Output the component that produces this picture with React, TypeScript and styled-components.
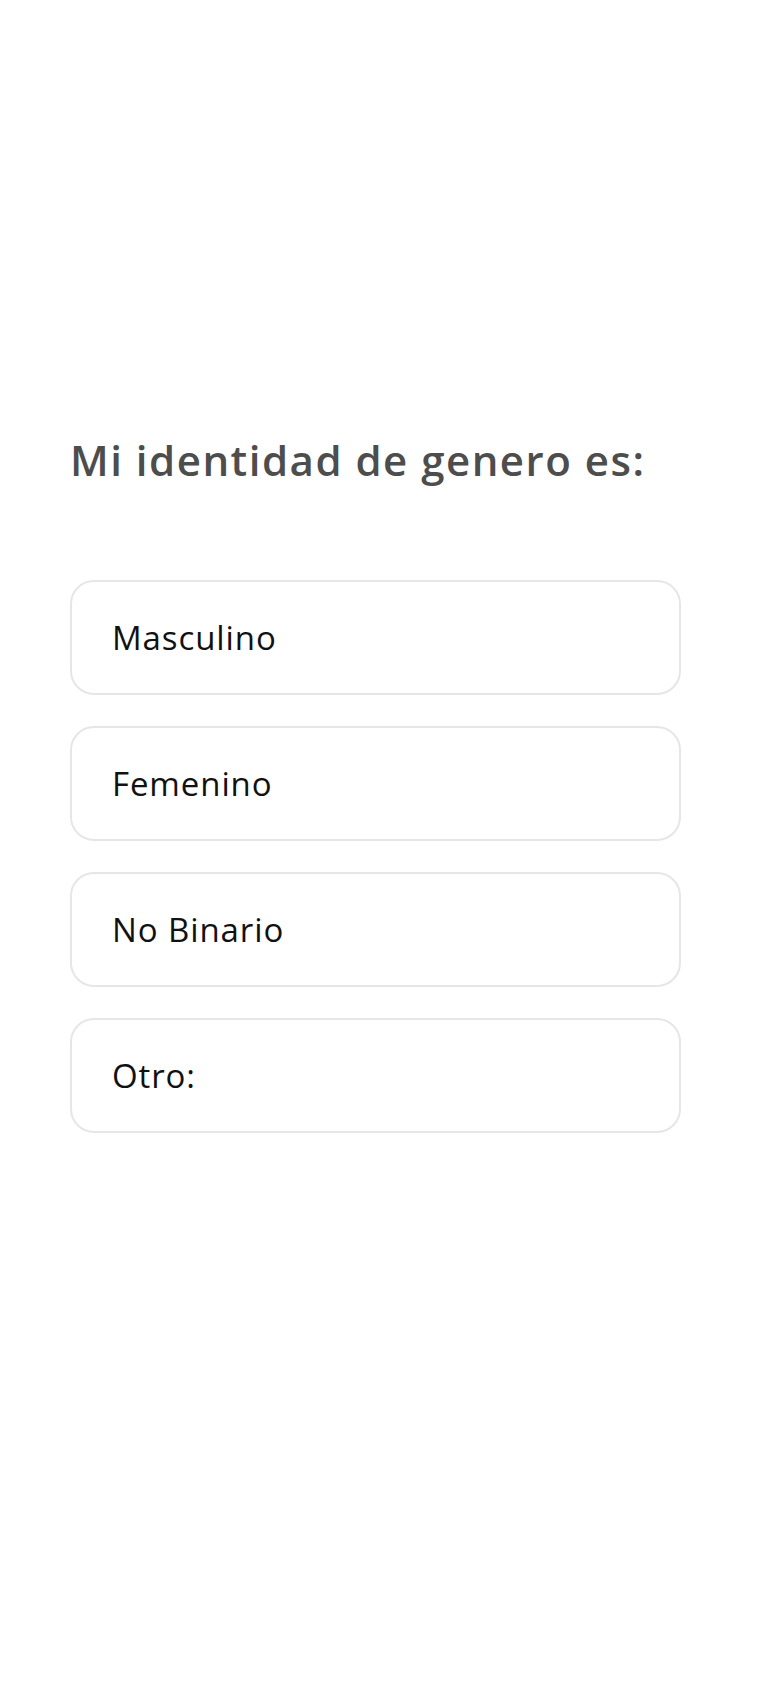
import React from 'react';
import styled, { createGlobalStyle } from 'styled-components';

const GlobalStyle = createGlobalStyle`
  html, body {
    margin: 0;
    padding: 0;
    background: #ffffff;
  }
  body {
    font-family: 'Open Sans', 'Liberation Sans', sans-serif;
  }
`;

const Page = styled.div`
  min-height: 1688px;
  box-sizing: border-box;
  padding: 432px 99px 0 70px;
  display: flex;
  flex-direction: column;
`;

const Title = styled.h1`
  margin: 0 0 92px 0;
  font-size: 42px;
  line-height: 56px;
  font-weight: 600;
  color: #4d4d4d;
  letter-spacing: 1.5px;
`;

const OptionList = styled.div`
  display: flex;
  flex-direction: column;
  gap: 31px;
`;

const Option = styled.button`
  height: 115px;
  box-sizing: border-box;
  width: 100%;
  display: flex;
  align-items: center;
  padding: 0 0 0 40px;
  background: #ffffff;
  border: 2px solid #e6e6e8;
  border-radius: 24px;
  font-family: 'Open Sans', 'Liberation Sans', sans-serif;
  font-size: 33px;
  font-weight: 400;
  letter-spacing: 0.9px;
  color: #111111;
  text-align: left;
  cursor: pointer;
`;

const options = ['Masculino', 'Femenino', 'No Binario', 'Otro:'];

const App: React.FC = () => {
  return (
    <>
      <GlobalStyle />
      <Page>
        <Title>Mi identidad de genero es:</Title>
        <OptionList>
          {options.map((label) => (
            <Option key={label} type="button">
              {label}
            </Option>
          ))}
        </OptionList>
      </Page>
    </>
  );
};

export default App;
